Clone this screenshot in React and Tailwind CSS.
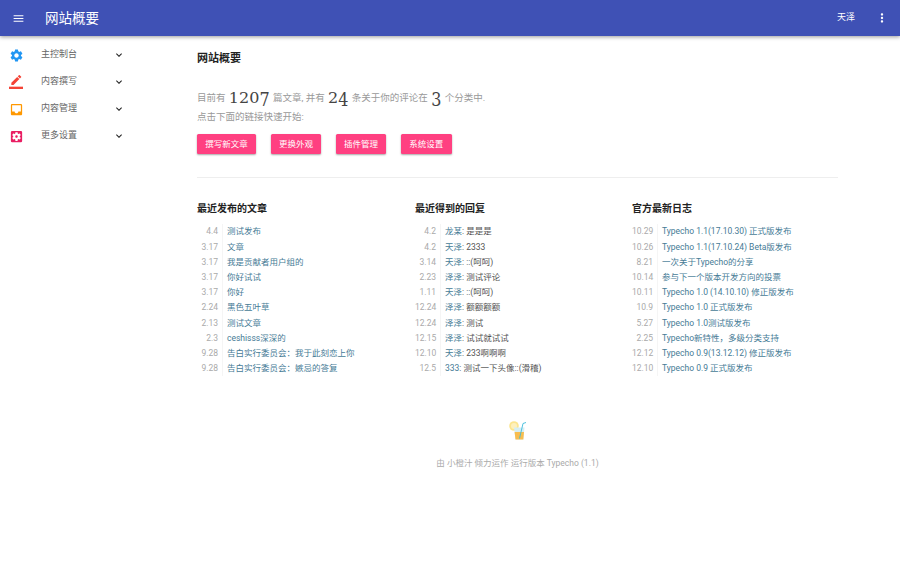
import {
  MdMenu,
  MdMoreVert,
  MdExpandMore,
  MdSettings,
  MdInbox,
  MdSettingsApplications,
} from "react-icons/md";

const font = "font-['Roboto','Noto_Sans_CJK_SC',sans-serif]";

function PenIcon({ className }) {
  return (
    <svg viewBox="0 0 24 24" fill="currentColor" className={className}>
      <path d="M17.75 7L14 3.25l-10 10V17h3.75l10-10zm2.96-2.96c.39-.39.39-1.02 0-1.41L18.37.29c-.39-.39-1.02-.39-1.41 0L15 2.25 18.75 6l1.96-1.96z" />
      <path d="M0 20h24v4H0z" />
    </svg>
  );
}

function DrinkIcon() {
  return (
    <svg viewBox="0 0 24 24" className="h-[24px] w-[24px]">
      <circle cx="8" cy="6" r="4.8" fill="#fbe58f" />
      <circle cx="8" cy="6" r="3" fill="#fdf0bd" />
      <path d="M8 7.5h10.5l-1.2 12H9.5z" fill="#d5eef4" />
      <path d="M8.6 12h9.4l-.7 7.5H9.5z" fill="#f8bd4f" />
      <path d="M13.5 18.5L17 3.5l3-1" fill="none" stroke="#3dbbdb" strokeWidth="0.9" />
    </svg>
  );
}

const menu = [
  { label: "主控制台", icon: <MdSettings className="h-[15px] w-[15px] text-[#2196f3]" /> },
  { label: "内容撰写", icon: <PenIcon className="h-[14px] w-[14px] text-[#f44336]" /> },
  { label: "内容管理", icon: <MdInbox className="h-[15px] w-[15px] text-[#ff9800]" /> },
  { label: "更多设置", icon: <MdSettingsApplications className="h-[15px] w-[15px] text-[#e91e63]" /> },
];

const buttons = [
  { label: "撰写新文章", width: "w-[59px]" },
  { label: "更换外观", width: "w-[50.5px]" },
  { label: "插件管理", width: "w-[50.5px]" },
  { label: "系统设置", width: "w-[50.5px]" },
];

const posts = [
  ["4.4", "测试发布"],
  ["3.17", "文章"],
  ["3.17", "我是贡献者用户组的"],
  ["3.17", "你好试试"],
  ["3.17", "你好"],
  ["2.24", "黑色五叶草"],
  ["2.13", "测试文章"],
  ["2.3", "ceshisss深深的"],
  ["9.28", "告白实行委员会：我于此刻恋上你"],
  ["9.28", "告白实行委员会：嫉忌的答复"],
];

const replies = [
  ["4.2", "龙某", "是是是"],
  ["4.2", "天泽", "2333"],
  ["3.14", "天泽", "::(呵呵)"],
  ["2.23", "泽泽", "测试评论"],
  ["1.11", "天泽", "::(呵呵)"],
  ["12.24", "泽泽", "额额额额"],
  ["12.24", "泽泽", "测试"],
  ["12.15", "泽泽", "试试就试试"],
  ["12.10", "天泽", "233啊啊啊"],
  ["12.5", "333", "测试一下头像::(滑稽)"],
];

const logs = [
  ["10.29", "Typecho 1.1(17.10.30) 正式版发布"],
  ["10.26", "Typecho 1.1(17.10.24) Beta版发布"],
  ["8.21", "一次关于Typecho的分享"],
  ["10.14", "参与下一个版本开发方向的投票"],
  ["10.11", "Typecho 1.0 (14.10.10) 修正版发布"],
  ["10.9", "Typecho 1.0 正式版发布"],
  ["5.27", "Typecho 1.0测试版发布"],
  ["2.25", "Typecho新特性，多级分类支持"],
  ["12.12", "Typecho 0.9(13.12.12) 修正版发布"],
  ["12.10", "Typecho 0.9 正式版发布"],
];

function Row({ date, children }) {
  return (
    <li className="flex h-[15.2px] items-center text-[8.5px] leading-[15.2px]">
      <span className="w-[26px] shrink-0 border-r border-[#f5f5f5] pr-[4px] text-right text-[#aaa]">{date}</span>
      <span className="whitespace-nowrap pl-[4px]">{children}</span>
    </li>
  );
}

function Column({ title, children }) {
  return (
    <section>
      <h3 className="mb-[8.4px] text-[10px] font-bold leading-[15px] text-[#222]">{title}</h3>
      <ul>{children}</ul>
    </section>
  );
}

// the reference uses old-style figures: 3, 4 and 7 hang below the other digits
function Num({ children }) {
  return (
    <span className="mx-[1px] font-['DejaVu_Serif',serif] text-[16px] leading-none text-[#444]">
      {children.split("").map((d, i) => (
        <span
          key={i}
          className={
            "347".includes(d)
              ? "inline-block origin-top scale-y-[1.2]"
              : "inline-block origin-bottom scale-y-[0.95]"
          }
        >
          {d}
        </span>
      ))}
    </span>
  );
}

export default function App() {
  return (
    <div className={`${font} min-h-[562px] bg-white`}>
      <header className="relative z-10 flex h-[36px] items-center bg-[#3f51b5] text-white shadow-[0_1px_4px_rgba(0,0,0,0.4)]">
        <MdMenu className="ml-[12px] h-[13px] w-[13px]" />
        <h1 className="ml-[20px] text-[13.5px]">网站概要</h1>
        <span className="ml-auto text-[9px]">天泽</span>
        <MdMoreVert className="ml-[20px] mr-[11px] h-[14px] w-[14px]" />
      </header>

      <div className="flex">
        <aside className="w-[197px] shrink-0 pt-[5.5px]">
          {menu.map((item) => (
            <div key={item.label} className="flex h-[27px] items-center">
              <span className="flex w-[32px] justify-center">{item.icon}</span>
              <span className="ml-[9px] w-[72px] text-[9px] text-[#666]">{item.label}</span>
              <MdExpandMore className="h-[12px] w-[12px] text-[#222]" />
            </div>
          ))}
        </aside>

        <main className="w-[641px]">
          <h2 className="pt-[16px] text-[11px] font-bold leading-[14px] text-[#222]">网站概要</h2>

          <p className="mt-[23px] flex h-[18px] items-center whitespace-pre text-[9.5px] text-[#999]">
            目前有 <Num>1207</Num> 篇文章, 并有 <Num>24</Num> 条关于你的评论在 <Num>3</Num> 个分类中.
          </p>
          <p className="mt-[3px] text-[9.5px] leading-[14px] text-[#999]">点击下面的链接快速开始:</p>

          <div className="mt-[10px] flex gap-[14.7px]">
            {buttons.map((b) => (
              <button
                key={b.label}
                className={`${b.width} h-[20px] rounded-[1.5px] bg-[#ff4081] text-[8.5px] text-white shadow-[0_1px_2px_rgba(0,0,0,0.35)]`}
              >
                {b.label}
              </button>
            ))}
          </div>

          <hr className="mt-[23px] border-[#eeeeee]" />

          <div className="mt-[23px] grid grid-cols-[218px_217px_1fr]">
            <Column title="最近发布的文章">
              {posts.map(([date, text], i) => (
                <Row key={i} date={date}>
                  <span className="text-[#467b96]">{text}</span>
                </Row>
              ))}
            </Column>
            <Column title="最近得到的回复">
              {replies.map(([date, name, text], i) => (
                <Row key={i} date={date}>
                  <span className="text-[#467b96]">{name}</span>
                  <span className="text-[#555]">: {text}</span>
                </Row>
              ))}
            </Column>
            <Column title="官方最新日志">
              {logs.map(([date, text], i) => (
                <Row key={i} date={date}>
                  <span className="text-[#467b96]">{text}</span>
                </Row>
              ))}
            </Column>
          </div>

          <footer className="mt-[44px] flex flex-col items-center">
            <DrinkIcon />
            <p className="mt-[13px] text-[8.5px] leading-[12px] text-[#aaa]">由 小橙汁 倾力运作 运行版本 Typecho (1.1)</p>
          </footer>
        </main>
      </div>
    </div>
  );
}
